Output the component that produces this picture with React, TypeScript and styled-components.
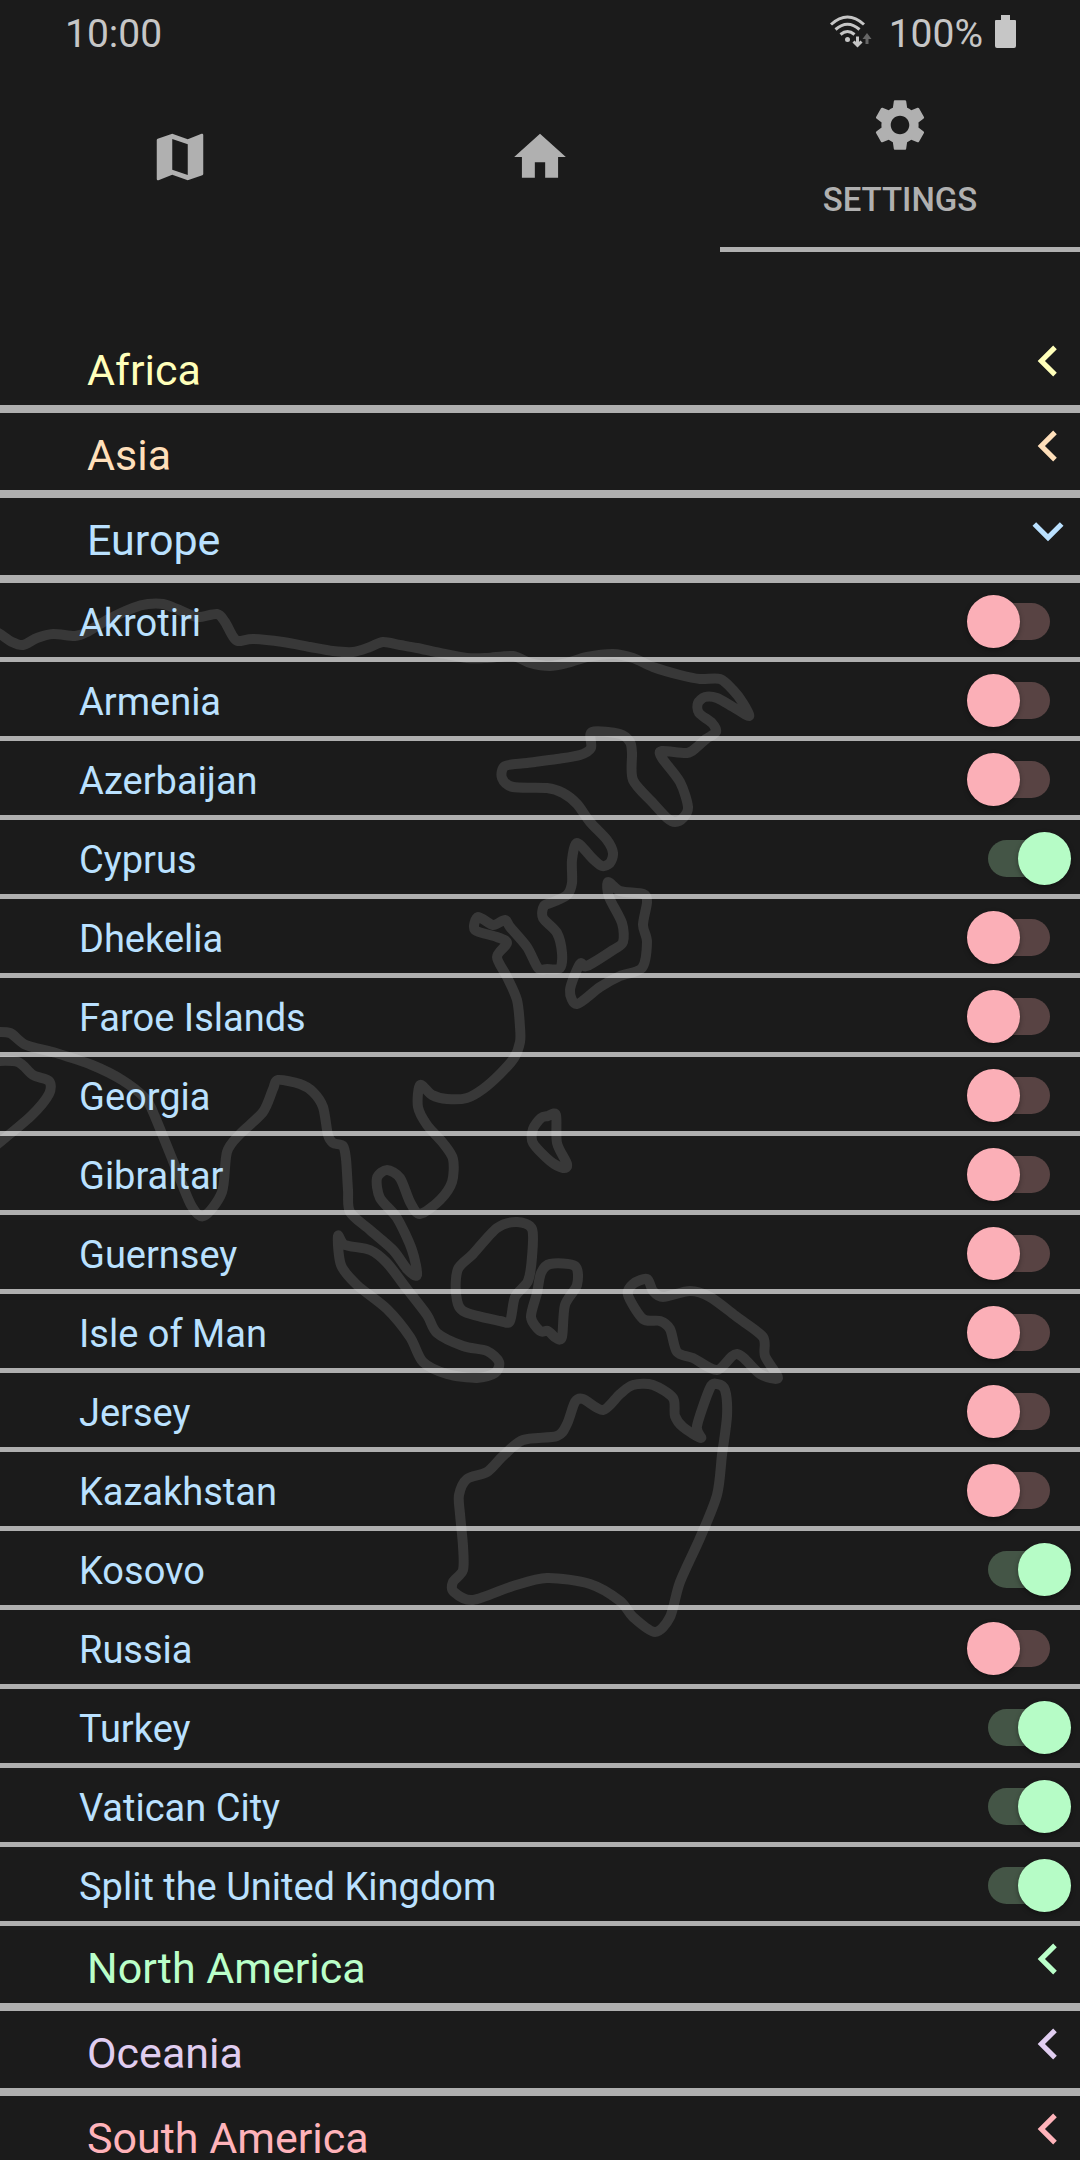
import React, { useState } from "react";
import styled, { createGlobalStyle } from "styled-components";
import { MdHome, MdMap, MdSettings, MdChevronLeft, MdExpandMore } from "react-icons/md";

const colors = {
  page: "#1b1b1b",
  tint: "#b0b0b0",
  status: "#c6c6c6",
  divider: "rgba(255, 255, 255, 0.65)",
  outline: "#383838",
  on: "#b6fcc6",
  onTrack: "#445546",
  off: "#fbafb7",
  offTrack: "#584343",
};

const GlobalStyle = createGlobalStyle`
  *, *::before, *::after { box-sizing: border-box; }
  body { margin: 0; background: ${colors.page}; font-family: Roboto, "Noto Sans", sans-serif; }
  button, input { font: inherit; color: inherit; margin: 0; }
`;

const Screen = styled.div`
  position: relative;
  isolation: isolate;
  display: flex;
  flex-direction: column;
  height: 100vh;
  overflow: hidden;
`;

const Backdrop = styled.svg`
  position: absolute;
  inset: 0;
  z-index: -1;
  width: 100%;
  height: 100%;
  fill: none;
  stroke: ${colors.outline};
  stroke-width: 10;
  stroke-linejoin: round;
`;

const StatusBar = styled.header`
  flex: none;
  display: flex;
  align-items: center;
  justify-content: space-between;
  height: 63px;
  padding: 4px 64px 0 65px;
  font-size: 39px;
  line-height: 46px;
  color: ${colors.status};
`;

const StatusGroup = styled.div`
  display: flex;
  align-items: center;
`;

const WifiIcon = styled.svg`
  width: 44px;
  height: 34px;
  margin: 0 16px 4px 0;
`;

const BatteryIcon = styled.svg`
  width: 21px;
  height: 33px;
  margin: 0 0 4px 12px;
`;

const Tabs = styled.nav`
  flex: none;
  display: grid;
  grid-template-columns: repeat(3, 1fr);
  height: 189px;
`;

const Tab = styled.button<{ $active?: boolean }>`
  display: flex;
  flex-direction: column;
  align-items: center;
  justify-content: center;
  gap: 24px;
  padding: 4px 0 0;
  border: 0;
  border-bottom: 5px solid ${(p) => (p.$active ? colors.tint : "transparent")};
  background: none;
  color: ${colors.tint};
  font-size: 33px;
  font-weight: 500;
  line-height: 40px;
  text-transform: uppercase;

  svg {
    width: 62px;
    height: 62px;
  }
`;

const List = styled.main`
  flex: 1;
  min-height: 0;
  margin-top: 76px;
  overflow-y: auto;
  scrollbar-width: none;
`;

const RegionHeading = styled.h2`
  margin: 0;
  font: inherit;
`;

const RegionButton = styled.button<{ $color: string }>`
  display: flex;
  align-items: flex-start;
  justify-content: space-between;
  width: 100%;
  height: 85px;
  padding: 2px 1px 0 87px;
  border: 0;
  border-bottom: 8px solid ${colors.divider};
  background: none;
  color: ${(p) => p.$color};
  font-size: 43px;
  line-height: 40px;
  text-align: left;

  span {
    padding-top: 20px;
  }

  svg {
    width: 62px;
    height: 62px;
  }
`;

const CountryRow = styled.label<{ $color: string }>`
  display: flex;
  align-items: center;
  justify-content: space-between;
  height: 79px;
  padding: 3px 9px 0 79px;
  border-bottom: 5px solid ${colors.divider};
  color: ${(p) => p.$color};
  font-size: 38px;
  line-height: 46px;

  span {
    padding-top: 2px;
  }
`;

const Switch = styled.input`
  appearance: none;
  position: relative;
  flex: none;
  width: 104px;
  height: 53px;

  &::before {
    content: "";
    position: absolute;
    inset: 8px 21px;
    border-radius: 19px;
    background: ${colors.offTrack};
  }

  &::after {
    content: "";
    position: absolute;
    top: 0;
    left: 0;
    width: 53px;
    height: 53px;
    border-radius: 50%;
    background: ${colors.off};
    box-shadow: 0 2px 5px rgba(0, 0, 0, 0.35);
  }

  &:checked::before {
    background: ${colors.onTrack};
  }

  &:checked::after {
    left: auto;
    right: 0;
    background: ${colors.on};
  }
`;

type Point = [number, number];

const parse = (text: string): Point[] =>
  text.trim().split(/\s+/).map((pair) => pair.split(",").map(Number) as Point);

/* Smooth curve that passes through every point. */
function curve(text: string, closed = false) {
  const pts = parse(text);
  const n = pts.length;
  const at = (i: number): Point =>
    closed ? pts[(i + n) % n] : pts[Math.max(0, Math.min(n - 1, i))];
  let d = `M${pts[0][0]} ${pts[0][1]}`;
  for (let i = 0; i < (closed ? n : n - 1); i++) {
    const [a, b, c, e] = [at(i - 1), at(i), at(i + 1), at(i + 2)];
    d += `C${b[0] + (c[0] - a[0]) / 7} ${b[1] + (c[1] - a[1]) / 7} ${c[0] - (e[0] - b[0]) / 7} ${c[1] - (e[1] - b[1]) / 7} ${c[0]} ${c[1]}`;
  }
  return closed ? d + "Z" : d;
}

const asia = `-6,631 0,634 12,642 23,645 37,638 53,634 75,636 87,632 107,620 133,608 148,604 163,604 177,609 197,617 217,614
  225,622 232,635 238,641 253,639 283,642 310,647 333,651 353,652 370,647 383,642 400,645 417,648 440,653 467,658 487,658
  513,656 530,663 550,666 567,663 587,657 613,654 633,658 653,667 680,675 700,679 720,679 733,690 743,703 749,716 733,707
  717,698 705,697 698,703 699,713 712,723 716,732 706,739 697,747 687,753 662,751 662,758 680,782 688,807 683,818 675,822
  667,818 653,803 633,780 632,753 630,742 620,734 592,732 591,748 580,755 557,759 527,763 505,766 502,778 513,787 547,788
  563,793 577,804 590,822 607,840 613,853 610,863 602,866 592,858 577,843 572,860 572,883 567,895 553,902 544,906 543,918
  557,933 562,953 560,968 547,969 538,968 527,947 510,927 505,920 493,925 478,917 475,930 497,937 507,943 497,957 507,977
  517,1000 520,1027 520,1042 514,1058 500,1074 483,1089 467,1098 447,1099 432,1095 420,1085 418,1107 427,1125 443,1143
  453,1159 452,1182 440,1200 420,1214 410,1202 400,1178 387,1170 377,1178 380,1198 397,1218 412,1250 417,1275 407,1269
  393,1250 370,1230 350,1212 348,1190 346,1159 343,1146 333,1143 328,1135 323,1107 313,1092 300,1084 278,1080 273,1089
  263,1112 240,1134 227,1152 222,1192 204,1216 191,1205 173,1161 153,1112 145,1098 122,1080 92,1065 56,1053 26,1045 10,1033 -6,1032`;
const arabia = "-6,1061 18,1062 33,1075 49,1081 49,1094 31,1116 -6,1147";
const japan = `608,882 620,891 643,894 647,902 643,925 647,942 642,968 620,976 600,987 577,1004 570,990 580,964 587,966 613,950
  623,942 622,923 609,897`;
const islands = [
  japan,
  "548,1116 556,1115 557,1143 567,1164 563,1168 550,1161 533,1143 533,1129 541,1118",
  `338,1236 345,1245 370,1250 387,1263 407,1289 427,1315 437,1333 463,1346 487,1351 499,1362 495,1373 477,1378 447,1374
   423,1362 410,1337 387,1309 357,1285 341,1265`,
  "497,1228 517,1222 532,1229 532,1257 528,1281 515,1297 510,1321 500,1321 463,1311 456,1293 458,1269 473,1254",
  "550,1264 575,1266 577,1285 565,1305 562,1337 556,1338 548,1331 540,1331 531,1317 537,1293 541,1273",
  `647,1279 653,1291 663,1297 690,1291 710,1297 737,1317 763,1337 765,1356 778,1378 760,1374 737,1354 717,1370 693,1358
   677,1352 670,1329 660,1321 643,1319 628,1295 633,1284`,
  `701,1438 697,1426 710,1388 717,1384 725,1390 727,1416 722,1455 717,1495 700,1538 680,1582 670,1617 655,1632 633,1617
   620,1601 590,1584 547,1578 513,1586 473,1600 454,1592 453,1582 463,1570 463,1546 460,1514 459,1495 467,1479 487,1472
   503,1456 523,1440 557,1436 567,1424 575,1402 583,1399 603,1410 620,1394 633,1385 653,1385 673,1398 675,1416 683,1427`,
];

function WorldOutline() {
  return (
    <Backdrop viewBox="0 0 1080 2160" preserveAspectRatio="xMidYMid slice" aria-hidden="true">
      <path d={curve(asia)} />
      <path d={curve(arabia)} />
      {islands.map((points) => (
        <path key={points} d={curve(points, true)} />
      ))}
    </Backdrop>
  );
}

interface Region {
  name: string;
  color: string;
  countries: { name: string; on?: boolean }[];
}

const regions: Region[] = [
  { name: "Africa", color: "#ffffba", countries: [] },
  { name: "Asia", color: "#ffdfba", countries: [] },
  {
    name: "Europe",
    color: "#bae1ff",
    countries: [
      { name: "Akrotiri" },
      { name: "Armenia" },
      { name: "Azerbaijan" },
      { name: "Cyprus", on: true },
      { name: "Dhekelia" },
      { name: "Faroe Islands" },
      { name: "Georgia" },
      { name: "Gibraltar" },
      { name: "Guernsey" },
      { name: "Isle of Man" },
      { name: "Jersey" },
      { name: "Kazakhstan" },
      { name: "Kosovo", on: true },
      { name: "Russia" },
      { name: "Turkey", on: true },
      { name: "Vatican City", on: true },
      { name: "Split the United Kingdom", on: true },
    ],
  },
  { name: "North America", color: "#baffc9", countries: [] },
  { name: "Oceania", color: "#e0cdf0", countries: [] },
  { name: "South America", color: "#ffb3ba", countries: [] },
];

function RegionSection({ region }: { region: Region }) {
  const [open, setOpen] = useState(region.countries.length > 0);
  return (
    <section>
      <RegionHeading>
        <RegionButton $color={region.color} aria-expanded={open} onClick={() => setOpen(!open)}>
          <span>{region.name}</span>
          {open ? <MdExpandMore /> : <MdChevronLeft />}
        </RegionButton>
      </RegionHeading>
      {open &&
        region.countries.map((country) => (
          <CountryRow key={country.name} $color={region.color}>
            <span>{country.name}</span>
            <Switch type="checkbox" defaultChecked={country.on} />
          </CountryRow>
        ))}
    </section>
  );
}

export default function App() {
  return (
    <>
      <GlobalStyle />
      <Screen>
        <WorldOutline />
        <StatusBar>
          <time>10:00</time>
          <StatusGroup>
            <WifiIcon viewBox="0 0 44 34" fill="none" stroke="currentColor" strokeWidth="3" aria-hidden="true">
              <path d="M2 9.5Q18.500 -5.500 35 9.500M6.500 14.500Q18.500 4 30.500 14.500M11.500 19.500Q18.500 13.500 25.500 19.500" />
              <circle cx="18.500" cy="24.500" r="2.500" fill="currentColor" stroke="none" />
              <path d="M28.500 21.500V30M24.500 26.500L28.500 30.500L32.500 26.500" />
              <path d="M38 29V21" stroke="#666" />
              <path d="M33.500 24L38 18L42.500 24Z" fill="#666" stroke="none" />
            </WifiIcon>
            <span>100%</span>
            <BatteryIcon viewBox="0 0 21 33" fill="currentColor" aria-hidden="true">
              <path d="M6 0H15V5H20Q21 5 21 6V31Q21 33 19 33H2Q0 33 0 31V6Q0 5 1 5H6Z" />
            </BatteryIcon>
          </StatusGroup>
        </StatusBar>
        <Tabs>
          <Tab aria-label="Map">
            <MdMap />
          </Tab>
          <Tab aria-label="Home">
            <MdHome />
          </Tab>
          <Tab $active aria-current="page">
            <MdSettings />
            Settings
          </Tab>
        </Tabs>
        <List>
          {regions.map((region) => (
            <RegionSection key={region.name} region={region} />
          ))}
        </List>
      </Screen>
    </>
  );
}
